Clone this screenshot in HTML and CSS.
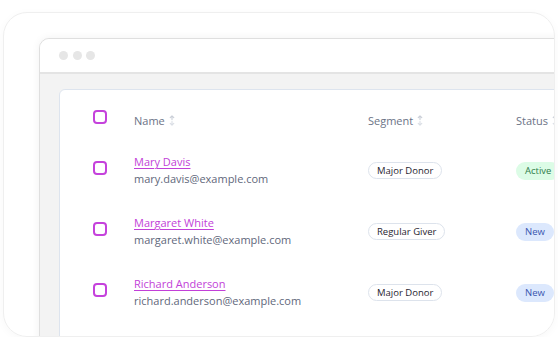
FILE: index.html
```html
<!DOCTYPE html>
<html>
<head>
    <title>Donors</title>
    <link rel="stylesheet" href="styles.css">
</head>
<body>
    <div class="frame">
        <div class="window">
            <div class="titlebar">
                <span class="dot"></span>
                <span class="dot"></span>
                <span class="dot"></span>
            </div>
            <div class="window-body">
                <div class="table-card">
                    <div class="table">
                        <div class="cell head"><span class="check"></span></div>
                        <div class="cell head">Name <svg class="sort" width="6" height="11" viewBox="0 0 6 11"><path d="M3 0.8V4.6M1.2 2.6L3 0.8L4.8 2.6" /><path class="low" d="M3 6.4V10.2M1.2 8.4L3 10.2L4.8 8.4" /></svg></div>
                        <div class="cell head">Segment <svg class="sort" width="6" height="11" viewBox="0 0 6 11"><path d="M3 0.8V4.6M1.2 2.6L3 0.8L4.8 2.6" /><path class="low" d="M3 6.4V10.2M1.2 8.4L3 10.2L4.8 8.4" /></svg></div>
                        <div class="cell head">Status <svg class="sort" width="6" height="11" viewBox="0 0 6 11"><path d="M3 0.8V4.6M1.2 2.6L3 0.8L4.8 2.6" /><path class="low" d="M3 6.4V10.2M1.2 8.4L3 10.2L4.8 8.4" /></svg></div>

                        <div class="cell"><span class="check"></span></div>
                        <div class="cell person">
                            <a href="#" class="name">Mary Davis</a>
                            <span class="email">mary.davis@example.com</span>
                        </div>
                        <div class="cell"><span class="segment">Major Donor</span></div>
                        <div class="cell"><span class="status active">Active</span></div>

                        <div class="cell"><span class="check"></span></div>
                        <div class="cell person">
                            <a href="#" class="name">Margaret White</a>
                            <span class="email">margaret.white@example.com</span>
                        </div>
                        <div class="cell"><span class="segment">Regular Giver</span></div>
                        <div class="cell"><span class="status new">New</span></div>

                        <div class="cell"><span class="check"></span></div>
                        <div class="cell person">
                            <a href="#" class="name">Richard Anderson</a>
                            <span class="email">richard.anderson@example.com</span>
                        </div>
                        <div class="cell"><span class="segment">Major Donor</span></div>
                        <div class="cell"><span class="status new">New</span></div>
                    </div>
                </div>
            </div>
        </div>
    </div>
</body>
</html>
```

FILE: styles.css
```css
* {
    margin: 0;
    padding: 0;
    box-sizing: border-box;
}

body {
    font-family: 'Open Sans', 'Noto Sans', sans-serif;
    background-color: #fff;
    color: #1f2430;
}

/* Outer card that clips the mock window */
.frame {
    margin: 12px 3px 0 3px;
    height: 325px;
    padding: 25px 0 0 35px;
    border: 1px solid #efefef;
    border-radius: 24px;
    box-shadow: 0 2px 10px rgba(0, 0, 0, 0.03);
    overflow: hidden;
}

.window {
    width: 560px;
    height: 320px;
    border: 1px solid #dfdfdf;
    border-radius: 10px 10px 0 0;
    background-color: #f3f3f3;
    box-shadow: 0 0 8px rgba(0, 0, 0, 0.06);
    overflow: hidden;
}

.titlebar {
    height: 35px;
    padding-left: 19px;
    background-color: #fff;
    border-bottom: 2px solid #e4e4e4;
    display: flex;
    align-items: center;
    gap: 4.5px;
}

.dot {
    width: 9px;
    height: 9px;
    border-radius: 50%;
    background-color: #e6e6e6;
}

.window-body {
    padding: 15px 0 0 19px;
}

.table-card {
    width: 540px;
    height: 280px;
    padding-top: 10px;
    background-color: #fff;
    border: 1px solid #dde4ee;
    border-radius: 6px;
}

.table {
    display: grid;
    grid-template-columns: 74px 234px 148px 1fr;
    grid-template-rows: 40px 61px 61px 61px;
}

.cell {
    display: flex;
    align-items: center;
}

.cell:nth-child(4n+1) {
    padding-left: 33px;
}

.check {
    width: 14px;
    height: 14px;
    margin-bottom: 6px;
    border: 2px solid #c542dc;
    border-radius: 4px;
}

.head {
    font-size: 11px;
    color: #6b7386;
    gap: 4px;
}

.sort {
    fill: none;
    stroke: #c9ced7;
    stroke-width: 1.1;
    stroke-linecap: round;
    stroke-linejoin: round;
}

.sort .low {
    stroke: #dadee5;
}

.person {
    flex-direction: column;
    align-items: flex-start;
    justify-content: center;
    gap: 1px;
}

.name {
    font-size: 11px;
    line-height: 16px;
    color: #c23fd8;
    text-decoration: underline;
    text-underline-offset: 2px;
}

.email {
    font-size: 11px;
    line-height: 16px;
    color: #5f687b;
}

.segment {
    font-size: 9.5px;
    line-height: 15px;
    padding: 0 8px;
    border: 1.5px solid #dde3ec;
    border-radius: 10px;
    color: #1f2430;
}

.status {
    font-size: 9.5px;
    line-height: 18px;
    padding: 0 9px;
    border-radius: 10px;
}

.status.active {
    background-color: #dcfce6;
    color: #2f7d4c;
}

.status.new {
    background-color: #dce8fd;
    color: #3a56b0;
}
```
